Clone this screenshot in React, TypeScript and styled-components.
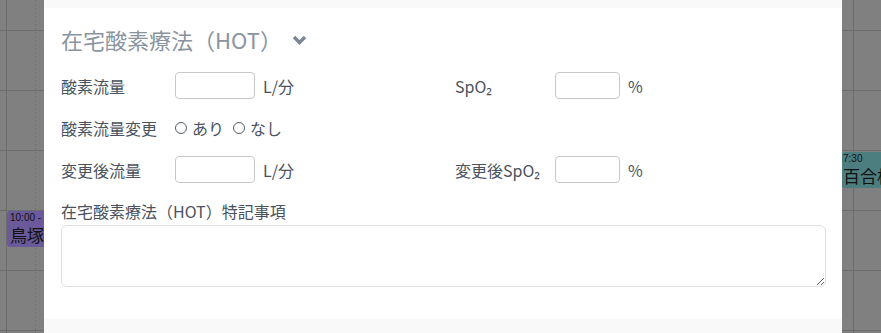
import styled, { createGlobalStyle } from "styled-components";

const GlobalStyle = createGlobalStyle`
  html, body {
    margin: 0;
    padding: 0;
    width: 881px;
    height: 333px;
    overflow: hidden;
    font-family: "Noto Sans CJK JP", "Noto Sans", sans-serif;
  }
`;

type CalEvent = { left: number; top: number; width: number; pad: number; time: string; name: string; color: string };

const events: CalEvent[] = [
  { left: 7, top: 211, width: 37, pad: 3, time: "10:00 -", name: "鳥塚", color: "#6a5a9b" },
  { left: 842, top: 152, width: 39, pad: 1, time: "7:30", name: "百合枝", color: "#4c7e7f" },
];

export default function App() {
  return (
    <Page>
      <GlobalStyle />
      <Calendar>
        {events.map((ev) => (
          <EventBox
            key={ev.name}
            $color={ev.color}
            $pad={ev.pad}
            style={{ left: ev.left, top: ev.top, width: ev.width }}
          >
            <span className="time">{ev.time}</span>
            <span className="name">{ev.name}</span>
          </EventBox>
        ))}
      </Calendar>
      <Modal>
        <Section>
          <Title>
            在宅酸素療法（HOT）
            <svg width="15" height="10" viewBox="0 0 15 10">
              <path d="M2 2 L7.5 7.5 L13 2" fill="none" stroke="#7b8794" strokeWidth="3.4" />
            </svg>
          </Title>
          <FormGrid>
            <Field>
              <Label>酸素流量</Label>
              <NumInput $w={80} />
              <Unit>L/分</Unit>
            </Field>
            <Field>
              <Label $w={100}>SpO₂</Label>
              <NumInput $w={65} />
              <Unit>%</Unit>
            </Field>
            <Field>
              <Label>酸素流量変更</Label>
              <RadioGroup>
                <RadioItem>
                  <Circle />
                  あり
                </RadioItem>
                <RadioItem>
                  <Circle />
                  なし
                </RadioItem>
              </RadioGroup>
            </Field>
            <Field />
            <Field>
              <Label>変更後流量</Label>
              <NumInput $w={80} />
              <Unit>L/分</Unit>
            </Field>
            <Field>
              <Label $w={100}>変更後SpO₂</Label>
              <NumInput $w={65} />
              <Unit>%</Unit>
            </Field>
          </FormGrid>
          <NoteLabel>在宅酸素療法（HOT）特記事項</NoteLabel>
          <Note />
        </Section>
      </Modal>
    </Page>
  );
}

const Page = styled.div`
  position: relative;
  width: 881px;
  height: 333px;
  overflow: hidden;
`;

const Calendar = styled.div`
  position: absolute;
  inset: 0;
  background-color: #808080;
  background-image:
    repeating-linear-gradient(
      to bottom,
      transparent 0,
      transparent 30px,
      #6c6c6c 30px,
      #6c6c6c 31px,
      transparent 31px,
      transparent 60px
    ),
    linear-gradient(to right, transparent 6px, #6c6c6c 6px, #6c6c6c 7px, transparent 7px),
    repeating-linear-gradient(to bottom, #747474 0, #747474 2px, transparent 2px, transparent 4px),
    linear-gradient(to right, transparent 853px, #6c6c6c 853px, #6c6c6c 854px, transparent 854px);
  background-size: 100% 100%, 100% 100%, 1px 100%, 100% 100%;
  background-position: 0 0, 0 0, 35px 0, 0 0;
  background-repeat: no-repeat, no-repeat, no-repeat, no-repeat;
`;

const EventBox = styled.div<{ $color: string; $pad: number }>`
  position: absolute;
  height: 36px;
  box-sizing: border-box;
  background: ${(p) => p.$color};
  border-radius: 3px 0 0 3px;
  padding: 1px 0 0 ${(p) => p.$pad}px;
  display: flex;
  flex-direction: column;
  color: #111;
  overflow: hidden;

  .time {
    font-size: 10px;
    line-height: 12px;
    font-family: "Liberation Sans", sans-serif;
    white-space: nowrap;
  }

  .name {
    font-size: 17px;
    line-height: 22px;
    white-space: nowrap;
  }
`;

const Modal = styled.div`
  position: absolute;
  left: 44px;
  top: 0;
  width: 798px;
  height: 360px;
  background: #f9f9f9;
  padding-top: 8px;
  box-sizing: border-box;
`;

const Section = styled.div`
  background: #fff;
  padding: 14px 16px 32px 17px;
  display: flex;
  flex-direction: column;
`;

const Title = styled.h2`
  margin: 0 0 16px;
  font-size: 22px;
  font-weight: 400;
  line-height: 34px;
  color: #8a949f;
  display: flex;
  align-items: center;
  gap: 10px;

  svg {
    margin-top: 1px;
  }
`;

const FormGrid = styled.div`
  display: grid;
  grid-template-columns: 394px 1fr;
  grid-auto-rows: 27px;
  row-gap: 15px;
`;

const Field = styled.div`
  display: flex;
  align-items: center;
`;

const Label = styled.span<{ $w?: number }>`
  width: ${(p) => p.$w ?? 114}px;
  flex-shrink: 0;
  font-size: 16px;
  color: #4a525c;
`;

const NumInput = styled.input.attrs({ type: "text" })<{ $w: number }>`
  width: ${(p) => p.$w}px;
  height: 27px;
  box-sizing: border-box;
  border: 1px solid #c8c8c8;
  border-radius: 4px;
  outline: none;
  padding: 0 6px;
  margin: 0;
`;

const Unit = styled.span`
  margin-left: 8px;
  font-size: 16px;
  color: #4a525c;
`;

const RadioGroup = styled.div`
  display: flex;
  align-items: center;
  gap: 9px;
`;

const RadioItem = styled.label`
  display: flex;
  align-items: center;
  gap: 5px;
  font-size: 16px;
  color: #4a525c;
`;

const Circle = styled.span`
  width: 12px;
  height: 12px;
  box-sizing: border-box;
  border: 1px solid #555d66;
  border-radius: 50%;
`;

const NoteLabel = styled.div`
  margin-top: 17px;
  font-size: 16px;
  line-height: 22px;
  color: #4a525c;
`;

const Note = styled.textarea`
  margin-top: 3px;
  height: 62px;
  box-sizing: border-box;
  border: 1px solid #e0e0e0;
  border-radius: 6px;
  resize: vertical;
  outline: none;
`;
